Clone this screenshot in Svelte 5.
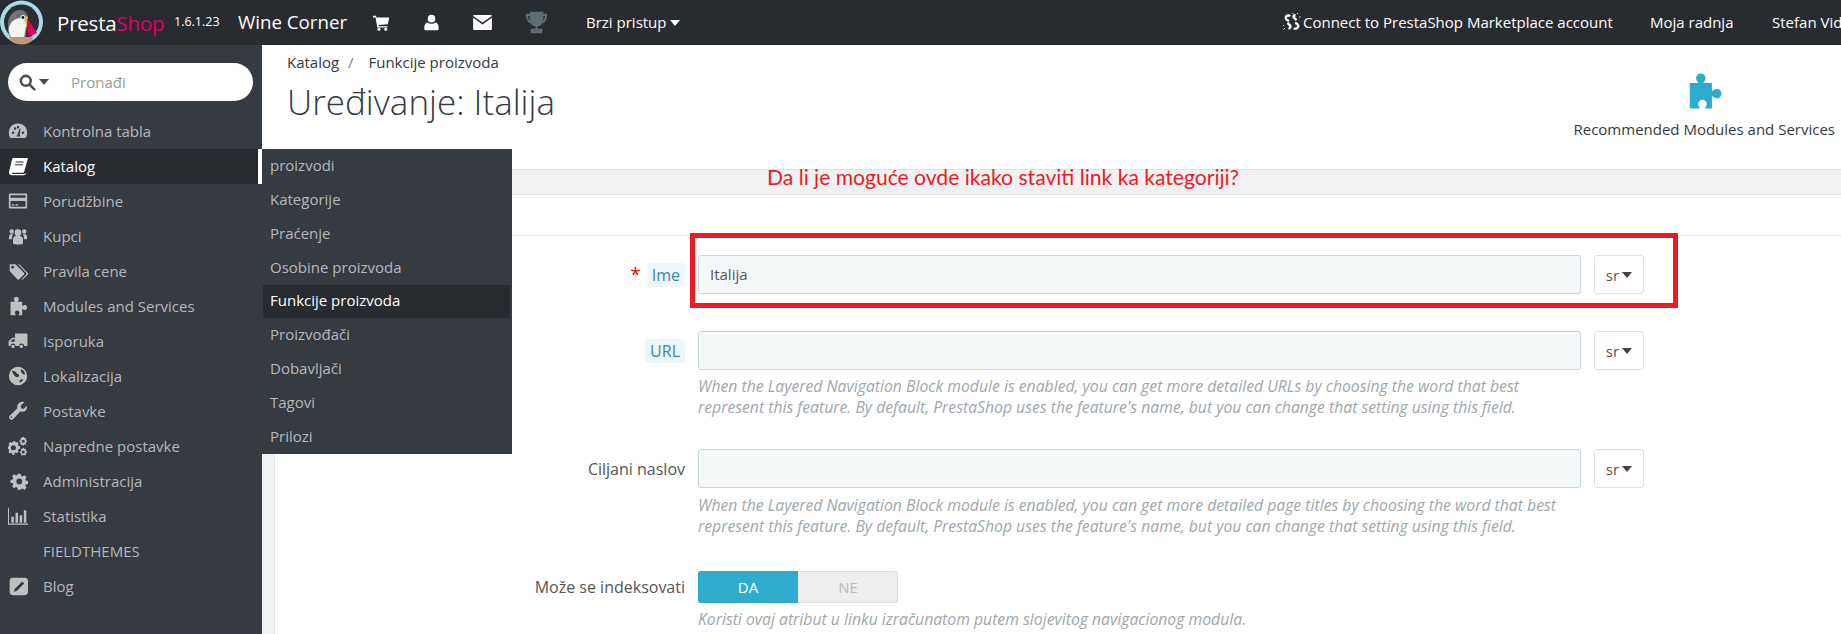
<script>
  const sideItems = [
    { label: 'Kontrolna tabla', icon: 'dash' },
    { label: 'Katalog', icon: 'book', active: true },
    { label: 'Porudžbine', icon: 'card' },
    { label: 'Kupci', icon: 'users' },
    { label: 'Pravila cene', icon: 'tags' },
    { label: 'Modules and Services', icon: 'puzzle' },
    { label: 'Isporuka', icon: 'truck' },
    { label: 'Lokalizacija', icon: 'globe' },
    { label: 'Postavke', icon: 'wrench' },
    { label: 'Napredne postavke', icon: 'cogs' },
    { label: 'Administracija', icon: 'cog' },
    { label: 'Statistika', icon: 'chart' },
    { label: 'FIELDTHEMES', icon: '' },
    { label: 'Blog', icon: 'edit' }
  ];
  const subItems = ['proizvodi', 'Kategorije', 'Praćenje', 'Osobine proizvoda', 'Funkcije proizvoda', 'Proizvođači', 'Dobavljači', 'Tagovi', 'Prilozi'];
  const puzzle = 'M3 7h5.500C7.500 5.500 7 4.800 7 3.800 7 2.200 8.300 1 10 1s3 1.200 3 2.800c0 1-.5 1.700-1.500 3.200H17v5.200c1.500-1 2.200-1.500 3.200-1.500 1.600 0 2.800 1.300 2.800 3s-1.200 3-2.800 3c-1 0-1.700-.5-3.200-1.500V23h-4.500c.8-1.300 1.200-2 1.200-2.800 0-1.500-1.200-2.700-2.700-2.700s-2.700 1.200-2.700 2.700c0 .8.400 1.500 1.200 2.800H3z';
</script>

{#snippet icon(name)}
  <svg class="side-icon" viewBox="0 0 24 24" fill="currentColor">
    {#if name === 'dash'}
      <path fill-rule="evenodd" d="M12 3C5.400 3 1 8 1 14c0 2.500.8 4.600 2 6.500h18c1.200-1.900 2-4 2-6.500C23 8 18.600 3 12 3zM6 15.500a1.500 1.500 0 1 1 0-3 1.500 1.500 0 0 1 0 3zm2.500-5a1.500 1.500 0 1 1 0-3 1.500 1.500 0 0 1 0 3zm3.500-1.500a1.500 1.500 0 1 1 0-3 1.500 1.500 0 0 1 0 3zm1.700 9.500h-3.400c.1-1.200.5-1.600 1-1.800L14 9h1l-.8 7.700c.4.400.5 1 .5 1.800zM18 15.500a1.500 1.500 0 1 1 0-3 1.500 1.500 0 0 1 0 3z"/>
    {:else if name === 'book'}
      <path fill-rule="evenodd" d="M6.500 2.500h16.500c.6 0 .9.500.7 1.100l-4.200 15c-.3 1-1.100 1.600-2.200 1.600H5.500c-1 0-1.300.8-.5 1.100.4.100 1 .2 1.800.2h12.700c.6 0 1-.3 1.200-.9l.8.500c-.4 1.300-1.200 1.900-2.500 1.900H4.300c-2.300 0-3.700-1.600-3-4L5 3.700c.2-.8.800-1.200 1.500-1.200zM9.500 6.500l-.4 1.300h9.500l.4-1.300zm-1 3.300-.4 1.300h9.500l.4-1.300z"/>
    {:else if name === 'card'}
      <path fill-rule="evenodd" d="M2.500 3h19A1.500 1.500 0 0 1 23 4.500v15a1.500 1.500 0 0 1-1.500 1.500h-19A1.500 1.500 0 0 1 1 19.500v-15A1.500 1.500 0 0 1 2.500 3zM3 5v3h18V5zm0 7v7h18v-7zm1.500 4h3v1.500h-3zm4.500 0h3v1.500H9z"/>
    {:else if name === 'users'}
      <circle cx="12" cy="8" r="4"/><circle cx="4.500" cy="6.500" r="2.700"/><circle cx="19.500" cy="6.500" r="2.700"/>
      <path d="M6 21v-5c0-3 2-4 3.500-4h5c1.500 0 3.500 1 3.500 4v5c-1 .8-3 1.200-6 1.200s-5-.4-6-1.200zM1 15c0-3 .8-5 2.500-5h3C5.500 11 4.500 13 4.700 16H2.500C1.500 16 1 15.500 1 15zM23 15c0-3-.8-5-2.500-5h-3c1 1 2 3 1.800 6h2.200c1 0 1.500-.5 1.500-1z"/>
    {:else if name === 'tags'}
      <path fill-rule="evenodd" d="M2 4h7l10 10c.8.800.8 1.700 0 2.500l-5.500 5.500c-.8.800-1.700.8-2.500 0L2 12zm3.500 1.800a1.700 1.700 0 1 0 0 3.400 1.700 1.700 0 0 0 0-3.400z"/>
      <path d="M12 4h1.500l10 10c.8.800.8 1.700 0 2.500l-5.500 5.500c-.6.600-1.300.7-2 .3l5.500-5.800c.8-.800.8-1.700 0-2.500z"/>
    {:else if name === 'puzzle'}
      <path d={puzzle}/>
    {:else if name === 'truck'}
      <path fill-rule="evenodd" d="M9 3h13.500c.5 0 .8.300.8.800V18h-4a3 3 0 0 0-6 0H9a3 3 0 0 0-6 0H1.500c-.5 0-.8-.3-.8-.8v-5L5 8h3.500V4c0-.5.200-1 .5-1zM6 9.500 3 12.500V13h5V9.500z"/>
      <circle cx="6" cy="18.500" r="2"/><circle cx="16" cy="18.500" r="2"/>
    {:else if name === 'globe'}
      <path fill-rule="evenodd" d="M12 1a11 11 0 1 0 0 22 11 11 0 0 0 0-22zM5 5.500c2 1 4 1 5 2.500s2 1 3 2.500-.5 3-2 3-3-1-4-3-2.500-3-2-5zm9 12c1-1.500 3-2 4.500-1.500-1 2-2.500 3.500-4.500 4-.5-1 0-1.500 0-2.500zm2-13.500c2.500 1 4 3 4.500 6-2 .5-3-.5-4-2s-1.500-2.500-.5-4z"/>
    {:else if name === 'wrench'}
      <path fill-rule="evenodd" d="M22.800 6.500c.5 3.500-2.500 7-6.300 6.500-.7-.1-1.200-.2-1.700-.5L6 21.800c-1 1-2.500 1-3.500 0l-.5-.5c-1-1-1-2.500 0-3.500l9.300-9c-1-4 2-7.800 6-7.800.8 0 1.500.1 2.200.4L15.500 5.500v3l2.800 1 4.500-3.500zM4 18.500a1 1 0 1 0 0 2 1 1 0 0 0 0-2z"/>
    {:else if name === 'cogs'}
      <path fill-rule="evenodd" d="M7 6l1.500.2.700 1.700 1.500-.8 2 2-.8 1.500.9 1.500 1.700.3v3l-1.700.3-.9 1.500.8 1.500-2 2-1.500-.8-1.500.6L8 22.500H5l-.3-1.800-1.500-.6-1.500.8-1-2 .8-1.500-.7-1.500-.8-.3v-3l.8-.3.7-1.500-.8-1.500 2-2 1.500.8 1.500-.6zM6.500 11a3 3 0 1 0 0 6 3 3 0 0 0 0-6z"/>
      <path fill-rule="evenodd" d="M19 1l.5 1.500 1.300-.5 1 1.200-.7 1.200.9 1 1 .1v1.500l-1 .2-.8 1 .6 1.200-1 1.200-1.300-.5-.5 1.400h-1.500l-.5-1.400-1.300.5-1-1.200.6-1.200-.8-1-1-.2V5.500l1-.1.900-1-.7-1.200 1-1.200 1.300.5.500-1.500zm-.700 3.500a1.800 1.800 0 1 0 0 3.600 1.800 1.800 0 0 0 0-3.600z"/>
      <path fill-rule="evenodd" d="M19 14l.5 1.500 1.300-.5 1 1.200-.7 1.200.9 1 1 .1V20l-1 .2-.8 1 .6 1.200-1 .6h-4.500l-1-.6.600-1.200-.8-1-1-.2v-1.500l1-.1.900-1-.7-1.200 1-1.200 1.300.5.500-1.500zm-.700 3.500a1.800 1.800 0 1 0 0 3.600 1.800 1.800 0 0 0 0-3.600z"/>
    {:else if name === 'cog'}
      <path fill-rule="evenodd" d="M10 2h4l.7 3.100 1.700.7 2.700-1.700 2.800 2.800-1.700 2.700.7 1.700 3.100.7v4l-3.100.7-.7 1.700 1.700 2.700-2.800 2.800-2.700-1.700-1.700.7L14 24h-4l-.7-3.300-1.700-.7-2.700 1.700-2.800-2.800 1.700-2.700-.7-1.700L0 14.500v-4l3.100-.7.700-1.700-1.700-2.700 2.800-2.800 2.700 1.700 1.700-.7zm2 6.500a4 4 0 1 0 0 8 4 4 0 0 0 0-8z" transform="translate(3 1.500) scale(.88)"/>
    {:else if name === 'chart'}
      <path d="M0 2h1.200v19H24v1.500H0zM4 13h3v7H4zM9 8h3v12H9zM14 11h3v9h-3zM19 5h3v15h-3z"/>
    {:else if name === 'edit'}
      <path fill-rule="evenodd" d="M6 2h14a4 4 0 0 1 4 4v13a4 4 0 0 1-4 4H6a4 4 0 0 1-4-4V6a4 4 0 0 1 4-4zm11 4.500L8 15.500 7 19l3.500-1 9-9z"/>
    {/if}
  </svg>
{/snippet}

<div class="page">
  <header class="topbar">
    <svg class="logo" viewBox="0 0 44 45">
      <circle cx="21.500" cy="22" r="21.500" fill="#a6dbe8"/>
      <circle cx="21.500" cy="22" r="17.500" fill="#2b2d31"/>
      <path d="M8 24c0-9 7-15 13-14 5 1 7 4 6.500 8l-1.500 20H11c-3-5-3-9-3-14z" fill="#6f7175"/>
      <path d="M9 27c2-6 7-9 12-9 4 1 5 4 5 8l-2 12H12c-3-4-4-7-3-11z" fill="#f6f4f0"/>
      <circle cx="23" cy="17.500" r="2.600" fill="#f6f4f0"/>
      <circle cx="23" cy="17.500" r="1.400" fill="#111"/>
      <path d="M25.500 16l2.500 1-1 11-2-6z" fill="#f3c325"/>
      <path d="M27 18l10 15-9 4z" fill="#df0067"/>
      <path d="M9 37h24l-1 4c-3 2.500-6.500 3.500-10.500 3.500S14 43.500 10.500 41z" fill="#b89b74"/>
    </svg>
    <span class="brand">Presta<span class="shop">Shop</span></span>
    <span class="version raised">1.6.1.23</span>
    <span class="shop-name raised">Wine Corner</span>
    <div class="quick-icons">
      <svg viewBox="0 0 20 20" fill="#fff"><path d="M0 2h3.500l.6 2H19l-1.500 8-11 1 .3 1.500H17V16H5L3 4H0z"/><circle cx="7" cy="18" r="1.800"/><circle cx="15" cy="18" r="1.800"/></svg>
      <svg viewBox="0 0 20 20" fill="#fff"><circle cx="10" cy="5.500" r="4.500"/><path d="M3 19c-1 0-1.500-.5-1.500-2 0-4 1.500-7 4-7 1 1 2.500 1.500 4.500 1.500S13.500 11 14.500 10c2.500 0 4 3 4 7 0 1.500-.5 2-1.500 2z"/></svg>
      <svg class="mail" viewBox="0 0 20 16" fill="#fff"><path d="M1.200 0h17.600c.7 0 1.200.5 1.200 1L10 8 0 1c0-.5.500-1 1.200-1zM0 3l10 7 10-7v11.800c0 .7-.5 1.200-1.200 1.200H1.200C.5 16 0 15.500 0 14.800z"/></svg>
      <svg class="trophy" viewBox="0 0 24 24" fill="none" stroke="#5f6d72" stroke-width="2.200"><path d="M6 2h12v8c0 3-2.500 5-6 5s-6-2-6-5z" fill="#5f6d72"/><path d="M6 4H2c0 5 1 7 4 8M18 4h4c0 5-1 7-4 8M12 15v4M7 22h10v-2.500H7z"/></svg>
    </div>
    <span class="quick raised">Brzi pristup<i class="caret"></i></span>
    <div class="top-right">
      <span class="connect raised">
        <svg viewBox="0 0 20 20" fill="none" stroke="#fff" stroke-width="2.600"><path d="M8 3.500C6 2 3 3 3 5.500c0 2 2 2.500 3.500 3.500M12 17c2 1 5 0 5-2.500 0-2-2-3-3.500-3.500M5 11l3 3c1 1 0 3-2 3M15 8 12 5c-1-1 0-2.500 2-2.500"/><path stroke-width="1.100" d="M11 1V0M15.500 1 17 0M1 14H0M2 17l-1.500 1.500M18 5l1.500-1"/></svg>
        Connect to PrestaShop Marketplace account
      </span>
      <span class="shop-link raised">Moja radnja</span>
      <span class="user raised">Stefan Vid</span>
    </div>
  </header>

  <div class="body">
    <aside class="sidebar">
      <div class="search">
        <svg viewBox="0 0 20 20" fill="none" stroke="#4a4f55" stroke-width="3"><circle cx="8" cy="8" r="5.800"/><path d="M12.500 12.500 18 18" stroke-linecap="round"/></svg>
        <i class="caret dark"></i>
        <span>Pronađi</span>
      </div>
      <nav>
        {#each sideItems as item}
          <div class="side-item" class:active={item.active}>
            <span class="icon-box">{#if item.icon}{@render icon(item.icon)}{/if}</span>
            {item.label}
          </div>
        {/each}
      </nav>
      <div class="submenu">
        {#each subItems as sub, i}
          <div class="sub-item" class:current={i === 4}>{sub}</div>
        {/each}
      </div>
    </aside>

    <main class="content">
      <section class="head">
        <div class="titles">
          <div class="crumbs">Katalog <span class="slash">/</span> Funkcije proizvoda</div>
          <h1>Uređivanje: Italija</h1>
        </div>
        <div class="recommended">
          <svg viewBox="0 0 24 24" fill="#2eacce"><path d={puzzle}/></svg>
          <span>Recommended Modules and Services</span>
        </div>
      </section>
      <div class="strip-wrap">
        <div class="band"></div>
        <div class="band-gap"></div>
        <form class="form">
          <div class="row">
            <div class="label"><span class="req">*</span><span class="hint">Ime</span></div>
            <div class="field"><div class="input">Italija</div></div>
            <div class="lang">sr<i class="caret lang-caret"></i></div>
          </div>
          <div class="row">
            <div class="label"><span class="hint">URL</span></div>
            <div class="field">
              <div class="input"></div>
              <p class="help">When the Layered Navigation Block module is enabled, you can get more detailed URLs by choosing the word that best represent this feature. By default, PrestaShop uses the feature's name, but you can change that setting using this field.</p>
            </div>
            <div class="lang">sr<i class="caret lang-caret"></i></div>
          </div>
          <div class="row after-help">
            <div class="label">Ciljani naslov</div>
            <div class="field">
              <div class="input"></div>
              <p class="help">When the Layered Navigation Block module is enabled, you can get more detailed page titles by choosing the word that best represent this feature. By default, PrestaShop uses the feature's name, but you can change that setting using this field.</p>
            </div>
            <div class="lang">sr<i class="caret lang-caret"></i></div>
          </div>
          <div class="row last">
            <div class="label switch-label">Može se indeksovati</div>
            <div class="field">
              <div class="switch"><span class="on">DA</span><span class="off">NE</span></div>
              <p class="help">Koristi ovaj atribut u linku izračunatom putem slojevitog navigacionog modula.</p>
            </div>
          </div>
        </form>
      </div>
      <div class="note">Da li je moguće ovde ikako staviti link ka kategoriji?</div>
      <div class="red-box"></div>
    </main>
  </div>
</div>

<style>
  :global(body) {
    margin: 0;
    background: #fff;
    font-family: 'Open Sans', 'Liberation Sans', sans-serif;
    overflow: hidden;
  }
  .page {
    width: 1841px;
    height: 634px;
    overflow: hidden;
    display: flex;
    flex-direction: column;
  }
  .topbar {
    height: 45px;
    flex: none;
    background: #282b30;
    color: #fff;
    display: flex;
    align-items: center;
    font-size: 15px;
    white-space: nowrap;
  }
  .raised {
    padding-bottom: 2px;
  }
  .logo {
    width: 44px;
    height: 45px;
    flex: none;
  }
  .brand {
    margin-left: 13px;
    font-size: 20.500px;
    width: 115px;
    letter-spacing: -0.2px;
    flex: none;
  }
  .shop {
    color: #df0067;
  }
  .version {
    margin-left: 2px;
    font-size: 12.500px;
    width: 64px;
    flex: none;
  }
  .shop-name {
    font-size: 18.700px;
    width: 135px;
    flex: none;
  }
  .quick-icons {
    display: flex;
    align-items: center;
    gap: 33px;
    width: 213px;
    flex: none;
  }
  .quick-icons svg {
    width: 17px;
    height: 17px;
  }
  .quick-icons .mail {
    width: 19px;
    height: 15px;
  }
  .quick-icons .trophy {
    width: 23px;
    height: 23px;
  }
  .caret {
    display: inline-block;
    border: 5px solid transparent;
    border-top: 6px solid #fff;
    border-bottom: 0;
    margin-left: 3px;
    vertical-align: 2px;
  }
  .top-right {
    margin-left: auto;
    display: flex;
    align-items: center;
    width: 558px;
    flex: none;
  }
  .connect {
    width: 367px;
    flex: none;
    display: flex;
    align-items: center;
    gap: 2px;
  }
  .connect svg {
    width: 18px;
    height: 18px;
  }
  .shop-link {
    width: 122px;
    flex: none;
  }
  .body {
    flex: 1;
    display: flex;
    min-height: 0;
  }
  .sidebar {
    width: 262px;
    flex: none;
    background: #363a41;
    position: relative;
    color: #b4b8bc;
    font-size: 15px;
  }
  .search {
    margin: 18px 9px 13px 8px;
    height: 38px;
    border-radius: 19px;
    background: #fff;
    display: flex;
    align-items: center;
    padding-left: 11px;
    color: #9a9a9a;
  }
  .search svg {
    width: 17px;
    height: 17px;
  }
  .caret.dark {
    border-top-color: #4a4f55;
    margin-right: 22px;
  }
  .side-item {
    height: 35px;
    box-sizing: border-box;
    padding-bottom: 2px;
    display: flex;
    align-items: center;
    white-space: nowrap;
  }
  .icon-box {
    width: 43px;
    display: flex;
    padding-left: 8px;
    box-sizing: border-box;
    color: #c0c0c0;
  }
  .side-icon {
    width: 20px;
    height: 20px;
  }
  .side-item.active {
    background: #282b30;
    color: #fff;
    font-weight: 500;
    box-shadow: inset -4px 0 0 #fff;
  }
  .side-item.active .icon-box {
    color: #fff;
  }
  .submenu {
    position: absolute;
    left: 262px;
    top: 104px;
    width: 250px;
    height: 305px;
    background: #363a41;
    display: grid;
    grid-template-rows: repeat(9, 1fr);
    z-index: 2;
  }
  .sub-item {
    display: flex;
    align-items: center;
    padding: 0 0 2px 7px;
    margin-right: 2px;
    margin-left: 1px;
    white-space: nowrap;
  }
  .sub-item.current {
    background: #282b30;
    color: #fff;
    font-weight: 500;
  }
  .content {
    flex: 1;
    min-width: 0;
    position: relative;
    display: flex;
    flex-direction: column;
    color: #363a41;
  }
  .head {
    height: 124px;
    flex: none;
    display: flex;
    justify-content: space-between;
    padding: 0 6px 0 25px;
    box-sizing: border-box;
  }
  .crumbs {
    font-size: 15px;
    line-height: 20px;
    margin-top: 7px;
  }
  .slash {
    color: #6c868e;
    margin: 0 11px 0 5px;
  }
  h1 {
    font-size: 35px;
    font-weight: 300;
    margin: 8px 0 0;
    line-height: 44px;
  }
  .recommended {
    display: flex;
    flex-direction: column;
    align-items: center;
    font-size: 15px;
    padding-top: 27px;
    gap: 9px;
  }
  .recommended svg {
    width: 38px;
    height: 38px;
  }
  .strip-wrap {
    flex: 1;
    min-height: 0;
    border-left: 12px solid #eff1f2;
    box-shadow: inset 1px 0 0 #dfe3e5;
  }
  .band {
    height: 26px;
    background: #eff1f2;
    border-top: 1px solid #dfe2e4;
    border-bottom: 1px solid #dfe2e4;
    box-sizing: border-box;
    margin-left: -12px;
  }
  .band-gap {
    height: 41px;
    border-bottom: 1px solid #eceeef;
    box-sizing: border-box;
  }
  .form {
    padding-top: 19px;
  }
  .row {
    display: flex;
    align-items: flex-start;
    margin-top: 37px;
  }
  .row:first-child {
    margin-top: 0;
  }
  .row.after-help {
    margin-top: 31px;
  }
  .row.last {
    margin-top: 34px;
  }
  .label {
    width: 411px;
    height: 39px;
    flex: none;
    display: flex;
    align-items: center;
    justify-content: flex-end;
    font-size: 16px;
    color: #555;
    white-space: nowrap;
  }
  .switch-label {
    height: 32px;
  }
  .req {
    color: #e00;
    font-size: 19px;
    margin-right: 6px;
    line-height: 1;
  }
  .hint {
    background: #edf7fb;
    color: #3586ae;
    border-radius: 3px;
    padding: 1px 5px;
  }
  .field {
    width: 883px;
    margin-left: 13px;
    flex: none;
  }
  .input {
    height: 39px;
    box-sizing: border-box;
    background: #f5f8f9;
    border: 1px solid #c7d6db;
    border-radius: 3px;
    padding-left: 11px;
    font-size: 15px;
    line-height: 36px;
    color: #555;
  }
  .help {
    margin: 6px 0 0;
    font-size: 15.750px;
    font-style: italic;
    color: #a0a7ab;
    line-height: 21px;
  }
  .after-help .help {
    margin-top: 7px;
  }
  .lang {
    width: 50px;
    height: 39px;
    box-sizing: border-box;
    margin-left: 13px;
    border: 1px solid #dfe2e4;
    border-radius: 3px;
    display: flex;
    align-items: center;
    justify-content: center;
    font-size: 15px;
    color: #555;
  }
  .lang-caret {
    border-top-color: #444;
  }
  .switch {
    display: flex;
    width: 200px;
    height: 32px;
    border-radius: 3px;
    overflow: hidden;
    font-size: 15px;
    background: #eeeeee;
    box-shadow: inset 0 0 0 1px #dcdcdc;
  }
  .switch span {
    flex: 1;
    display: flex;
    align-items: center;
    justify-content: center;
  }
  .on {
    background: #2eacce;
    color: #fff;
  }
  .off {
    color: #bbb;
  }
  .note {
    position: absolute;
    left: 505px;
    top: 119px;
    color: #ed1c24;
    font-family: Lato, 'Liberation Sans', sans-serif;
    font-size: 21.100px;
    white-space: nowrap;
  }
  .red-box {
    position: absolute;
    left: 428px;
    top: 188px;
    width: 988px;
    height: 75px;
    box-sizing: border-box;
    border: 5px solid #ed1c24;
  }
</style>
